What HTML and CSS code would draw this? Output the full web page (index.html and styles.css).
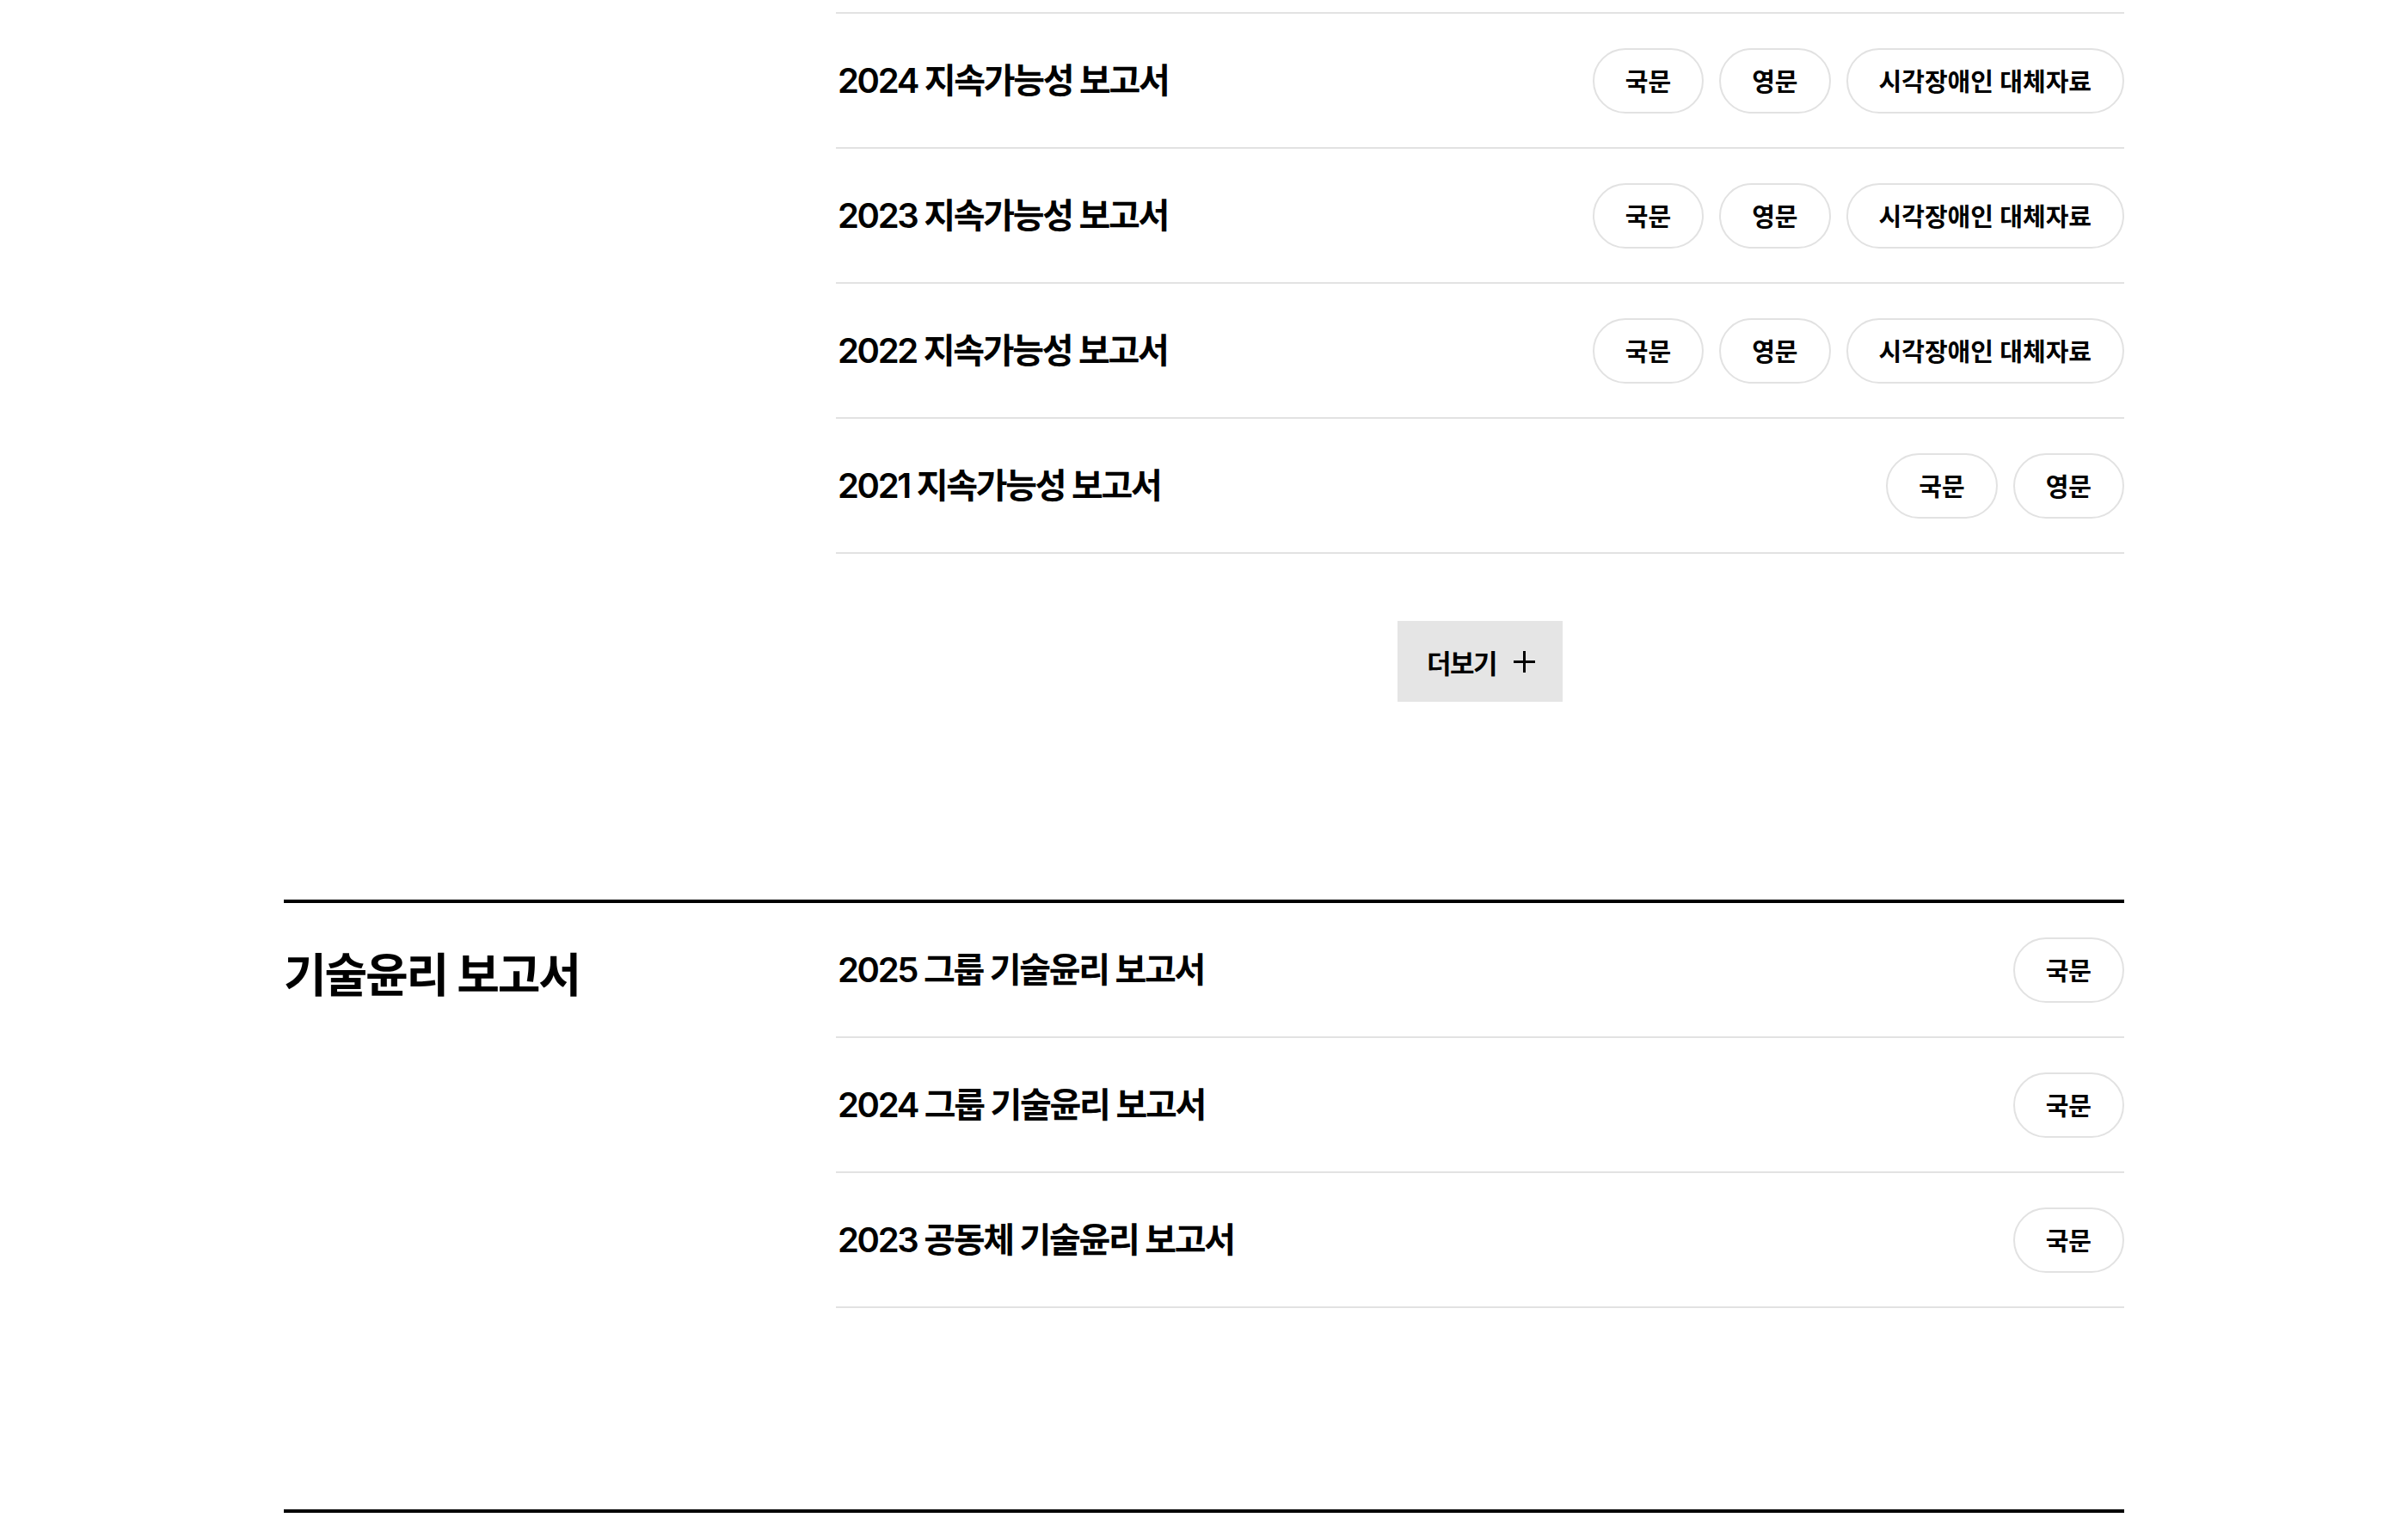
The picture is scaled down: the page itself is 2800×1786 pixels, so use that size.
FILE: index.html
```html
<!DOCTYPE html>
<html lang="ko">
<head>
	<meta charset="UTF-8">
	<meta name="viewport" content="width=device-width, initial-scale=1.0">
	<title>보고서</title>

	<link rel="stylesheet" href="styles.css">
</head>
<body>
	<main class="reports">
		<section class="group group--cont">
			<div class="group__head"></div>
			<div class="group__body">
				<ul class="report-list">
					<li class="report">
						<span class="report__title">2024 지속가능성 보고서</span>
						<div class="report__files">
							<a class="pill" href="#">국문</a>
							<a class="pill" href="#">영문</a>
							<a class="pill" href="#">시각장애인 대체자료</a>
						</div>
					</li>
					<li class="report">
						<span class="report__title">2023 지속가능성 보고서</span>
						<div class="report__files">
							<a class="pill" href="#">국문</a>
							<a class="pill" href="#">영문</a>
							<a class="pill" href="#">시각장애인 대체자료</a>
						</div>
					</li>
					<li class="report">
						<span class="report__title">2022 지속가능성 보고서</span>
						<div class="report__files">
							<a class="pill" href="#">국문</a>
							<a class="pill" href="#">영문</a>
							<a class="pill" href="#">시각장애인 대체자료</a>
						</div>
					</li>
					<li class="report">
						<span class="report__title">2021 지속가능성 보고서</span>
						<div class="report__files">
							<a class="pill" href="#">국문</a>
							<a class="pill" href="#">영문</a>
						</div>
					</li>
				</ul>
				<div class="more-wrap">
					<button class="more" type="button">
						<span>더보기</span>
						<svg class="more__icon" width="27" height="27" viewBox="0 0 27 27">
							<path d="M13.5 1v25M1 13.5h25" stroke="#000" stroke-width="3" fill="none"/>
						</svg>
					</button>
				</div>
			</div>
		</section>

		<section class="group group--last">
			<h2 class="group__head group__title">기술윤리 보고서</h2>
			<div class="group__body">
				<ul class="report-list">
					<li class="report">
						<span class="report__title">2025 그룹 기술윤리 보고서</span>
						<div class="report__files">
							<a class="pill" href="#">국문</a>
						</div>
					</li>
					<li class="report">
						<span class="report__title">2024 그룹 기술윤리 보고서</span>
						<div class="report__files">
							<a class="pill" href="#">국문</a>
						</div>
					</li>
					<li class="report">
						<span class="report__title">2023 공동체 기술윤리 보고서</span>
						<div class="report__files">
							<a class="pill" href="#">국문</a>
						</div>
					</li>
				</ul>
			</div>
		</section>

		<section class="group group--next"></section>
	</main>
</body>
</html>
```

FILE: styles.css
```css
* { box-sizing: border-box }
body {
	margin: 0;
	padding-top: 14px;
	background: #fff;
	color: #000;
	font-family: 'Inter', 'Noto Sans CJK KR', sans-serif;
}
ul {
	margin: 0;
	padding: 0;
	list-style: none;
}
a {
	color: inherit;
	text-decoration: none;
}
.reports {
	max-width: 2140px;
	margin: 0 auto;
}
.group {
	display: grid;
	grid-template-columns: 642px 1fr;
	padding-bottom: 230px;
	border-top: 4px solid #000;
}
.group--cont {
	border-top: 0;
}
.group--last {
	padding-bottom: 234px;
}
.group--next {
	min-height: 40px;
	padding-bottom: 0;
}
.group__title {
	margin: 50px 0 0;
	font-size: 54px;
	font-weight: 600;
	line-height: 1.3;
	letter-spacing: -2.2px;
}
.group--cont .report-list {
	border-top: 2px solid #e2e2e2;
}
.report {
	display: flex;
	height: 157px;
	align-items: center;
	justify-content: space-between;
	border-bottom: 2px solid #e2e2e2;
}
.report__title {
	padding: 0 0 6px 2px;
	font-size: 40px;
	font-weight: 600;
	letter-spacing: -2.3px;
}
.report__files {
	display: flex;
	gap: 18px;
}
.pill {
	display: inline-flex;
	height: 76px;
	padding: 0 36px 2px;
	align-items: center;
	border: 2px solid #e2e2e2;
	border-radius: 40px;
	font-size: 29px;
	font-weight: 600;
	letter-spacing: 0;
}
.more-wrap {
	display: flex;
	justify-content: center;
	padding-top: 78px;
}
.more {
	display: inline-flex;
	height: 94px;
	padding: 0 31px 0 34px;
	align-items: center;
	gap: 19px;
	border: 0;
	background: #e5e5e5;
	color: #000;
	font-family: inherit;
	font-size: 31px;
	font-weight: 600;
	letter-spacing: -1.5px;
	cursor: pointer;
}
.more__icon {
	display: block;
}
```
